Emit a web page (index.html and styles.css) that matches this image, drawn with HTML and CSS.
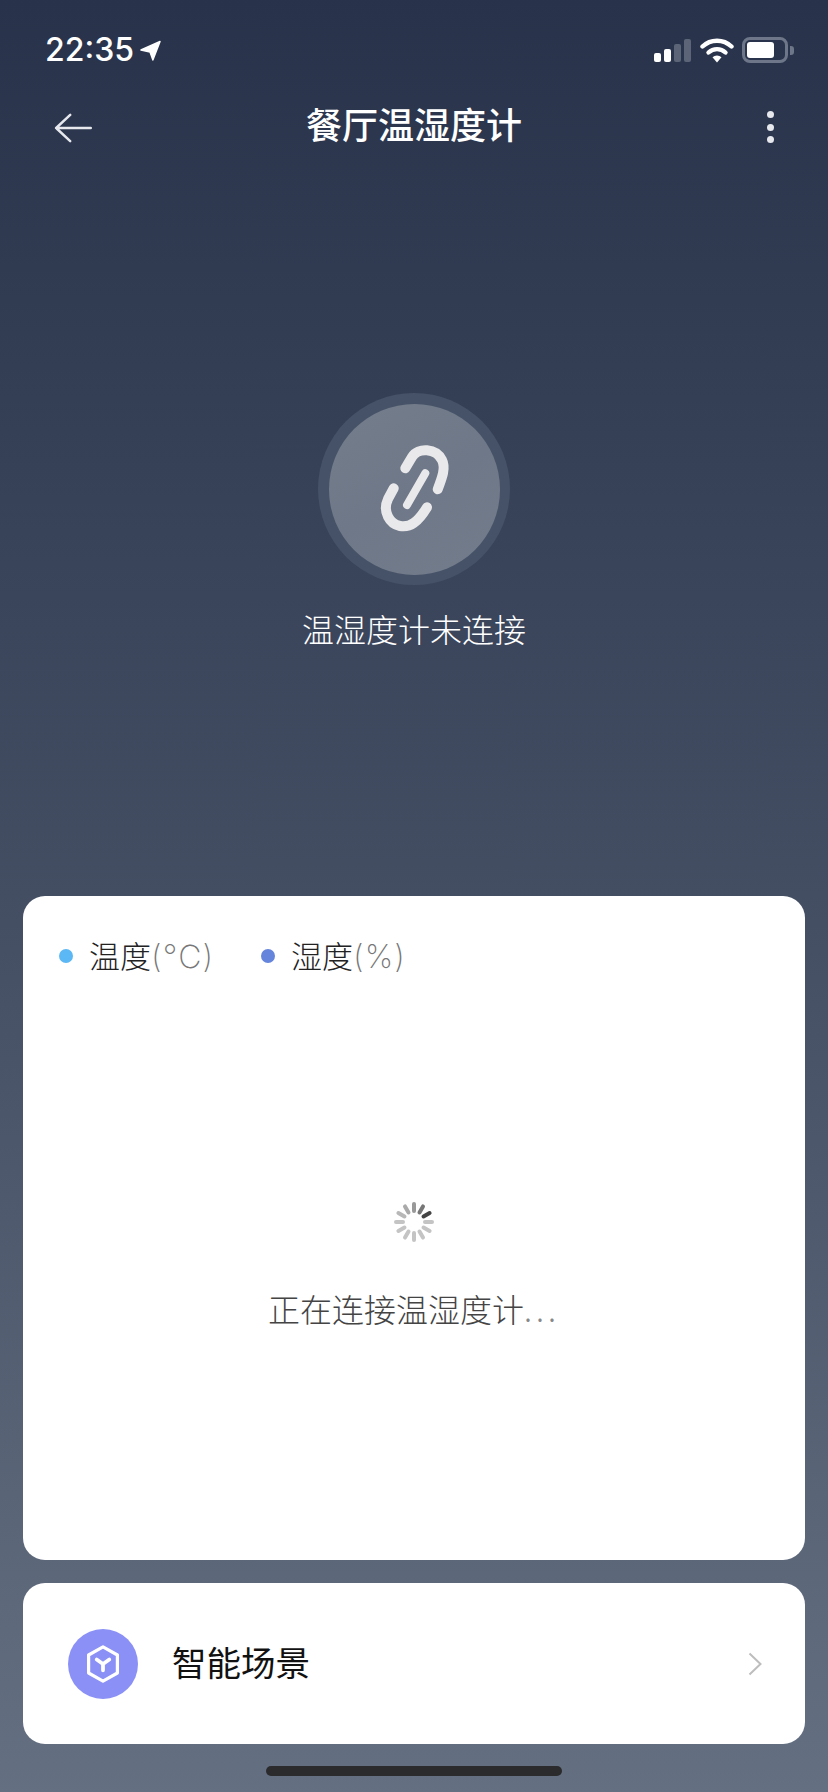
FILE: index.html
```html
<!DOCTYPE html>
<html lang="zh-CN">
<head>
<meta charset="utf-8">
<title>餐厅温湿度计</title>
<link rel="stylesheet" href="styles.css">
</head>
<body>
<div class="screen">
  <header class="status">
    <div class="status-left">
      <span class="time">22:35</span>
      <svg class="loc" viewBox="0 0 22 22"><path d="M1 10.5 21 1.5 13.5 21 10.5 12.5Z" fill="#fff" stroke="#fff" stroke-width="1.5" stroke-linejoin="round"/></svg>
    </div>
    <div class="status-right">
      <div class="signal">
        <span class="bar b1"></span><span class="bar b2"></span><span class="bar b3"></span><span class="bar b4"></span>
      </div>
      <svg class="wifi" viewBox="0 0 34 26"><path d="M2.5 9.5a21 21 0 0 1 29 0" fill="none" stroke="#fff" stroke-width="4.4" stroke-linecap="round"/><path d="M8.5 15.5a12.5 12.5 0 0 1 17 0" fill="none" stroke="#fff" stroke-width="4.4" stroke-linecap="round"/><path d="M12.5 20.2 17 25.5l4.5-5.3a6.5 6.5 0 0 0-9 0Z" fill="#fff"/></svg>
      <div class="battery"><span class="battery-fill"></span></div>
      <span class="battery-nub"></span>
    </div>
  </header>

  <nav class="nav">
    <svg class="back" viewBox="0 0 40 32"><path d="M39 16H2M17 2 2 16l15 14" fill="none" stroke="#e6e8ee" stroke-width="2.6" stroke-linecap="round" stroke-linejoin="round"/></svg>
    <h1 class="title">餐厅温湿度计</h1>
    <div class="more"><i></i><i></i><i></i></div>
  </nav>

  <section class="hero">
    <div class="ring">
      <div class="disc">
        <svg class="link" viewBox="362 439 100 100"><g fill="none" stroke="#e9e9eb" stroke-linecap="round"><path stroke-width="10" d="M403.3 468.3 410 457C416 447 434 448 440 460 444 468 440 478 435.7 489.3"/><path stroke-width="8" d="M423.3 473.3 405 505"/><path stroke-width="10" d="M391.7 488.3 386 499C380 512 388 524 398 526 408 528 416 522 425 507.3"/></g></svg>
      </div>
    </div>
    <p class="hero-text">温湿度计未连接</p>
  </section>

  <section class="card chart">
    <div class="legend">
      <div class="legend-item"><span class="dot dot-temp"></span><span class="legend-name">温度<span class="unit">(°C)</span></span></div>
      <div class="legend-item"><span class="dot dot-hum"></span><span class="legend-name">湿度<span class="unit">(%)</span></span></div>
    </div>
    <svg class="spinner" viewBox="-21 -21 42 42">
      <g stroke-width="4" stroke-linecap="round">
        <path d="M0-11V-18" stroke="#999"/>
        <path d="M0-11V-18" stroke="#777" transform="rotate(30)"/>
        <path d="M0-11V-18" stroke="#444" transform="rotate(60)"/>
        <path d="M0-11V-18" stroke="#c4c4c4" transform="rotate(90)"/>
        <path d="M0-11V-18" stroke="#c4c4c4" transform="rotate(120)"/>
        <path d="M0-11V-18" stroke="#c4c4c4" transform="rotate(150)"/>
        <path d="M0-11V-18" stroke="#c4c4c4" transform="rotate(180)"/>
        <path d="M0-11V-18" stroke="#c4c4c4" transform="rotate(210)"/>
        <path d="M0-11V-18" stroke="#c4c4c4" transform="rotate(240)"/>
        <path d="M0-11V-18" stroke="#c4c4c4" transform="rotate(270)"/>
        <path d="M0-11V-18" stroke="#b8b8b8" transform="rotate(300)"/>
        <path d="M0-11V-18" stroke="#aaa" transform="rotate(330)"/>
      </g>
    </svg>
    <p class="connecting">正在连接温湿度计<span class="ellipsis">...</span></p>
  </section>

  <section class="card scene">
    <div class="scene-icon">
      <svg viewBox="0 0 40 44"><path d="M20 3 36 12V32L20 41 4 32V12Z" fill="none" stroke="#fff" stroke-width="3.6" stroke-linejoin="round"/><path d="M13 17 20 22 27 17M20 22V29" fill="none" stroke="#fff" stroke-width="4.2" stroke-linecap="round" stroke-linejoin="round"/></svg>
    </div>
    <span class="scene-name">智能场景</span>
    <svg class="chevron" viewBox="0 0 14 24"><path d="M1.5 1.5 12.5 12 1.5 22.5" fill="none" stroke="#bdbdbd" stroke-width="2"/></svg>
  </section>

  <div class="home-bar"></div>
</div>
</body>
</html>
```

FILE: styles.css
```css
* { box-sizing: border-box; }
html, body { margin: 0; padding: 0; }
body { font-family: "Noto Sans CJK SC", "Noto Sans", sans-serif; }
.screen {
  width: 828px;
  height: 1792px;
  overflow: hidden;
  display: flex;
  flex-direction: column;
  background: linear-gradient(180deg, #28334b 0%, #434e63 50%, #646f81 100%);
}
.status {
  height: 96px;
  padding: 32px 34px 0 45px;
  display: flex;
  justify-content: space-between;
  align-items: flex-start;
}
.status-left { display: flex; align-items: center; height: 36px; }
.time {
  font-family: Inter, "Liberation Sans", sans-serif;
  font-size: 32px;
  font-weight: 500;
  line-height: 36px;
  color: #fff;
}
.loc { width: 21px; height: 21px; margin-left: 6px; }
.status-right { display: flex; align-items: center; height: 26px; margin-top: 5px; }
.signal { display: flex; align-items: flex-end; gap: 3px; height: 24px; }
.bar { width: 7px; border-radius: 2px; background: #fff; }
.b1 { height: 9px; }
.b2 { height: 13px; }
.b3 { height: 18px; background: #5b6577; }
.b4 { height: 23px; background: #5b6577; }
.wifi { width: 34px; height: 26px; margin-left: 9px; }
.battery {
  width: 46px;
  height: 26px;
  margin-left: 8px;
  padding: 2px;
  border: 3px solid #6d7789;
  border-radius: 8px;
}
.battery-fill { display: block; width: 27px; height: 16px; background: #fff; border-radius: 3px; }
.battery-nub { width: 4px; height: 9px; margin-left: 2px; background: #6d7789; border-radius: 0 3px 3px 0; }
.nav {
  height: 60px;
  padding: 0 54px;
  display: grid;
  grid-template-columns: 1fr auto 1fr;
  align-items: center;
}
.back { width: 38px; height: 30px; margin-top: 4px; }
.title {
  margin: 0 0 6px;
  font-size: 36px;
  font-weight: 500;
  line-height: 54px;
  color: #fff;
  text-align: center;
}
.more { display: flex; flex-direction: column; gap: 5.5px; width: 7px; justify-self: end; margin-top: 2px; }
.more i { display: block; width: 7px; height: 7px; border-radius: 50%; background: #e6e8ee; }
.hero {
  height: 740px;
  padding-top: 237px;
  display: flex;
  flex-direction: column;
  align-items: center;
}
.ring {
  width: 192px;
  height: 192px;
  border-radius: 50%;
  background: #465267;
  display: flex;
  align-items: center;
  justify-content: center;
}
.disc {
  width: 171px;
  height: 171px;
  border-radius: 50%;
  background: linear-gradient(150deg, #737d8b 0%, #6f7888 50%, #737c8b 100%);
  display: flex;
  align-items: center;
  justify-content: center;
}
.link { width: 100px; height: 100px; }
.hero-text {
  margin: 21px 0 0;
  font-size: 32px;
  font-weight: 300;
  line-height: 44px;
  color: #fff;
}
.card { margin: 0 23px; background: #fff; border-radius: 22px; }
.chart {
  height: 664px;
  display: flex;
  flex-direction: column;
  align-items: center;
  padding-top: 41px;
}
.legend { align-self: stretch; display: flex; padding-left: 36px; gap: 47px; }
.legend-item { display: flex; align-items: center; }
.dot { width: 14px; height: 14px; border-radius: 50%; }
.dot-temp { background: #5bb8f5; }
.dot-hum { background: #6585dc; }
.legend-name {
  margin-left: 16px;
  font-size: 31px;
  font-weight: 300;
  line-height: 36px;
  color: #222;
}
.unit {
  font-family: Inter, "Noto Sans", sans-serif;
  font-size: 32px;
  font-weight: 200;
  letter-spacing: 1px;
  color: #777;
}
.spinner { width: 42px; height: 42px; margin-top: 226px; }
.connecting {
  margin: 45px 0 0;
  font-size: 32px;
  font-weight: 300;
  line-height: 40px;
  color: #444;
}
.ellipsis { letter-spacing: 4px; color: #888; }
.scene {
  height: 161px;
  margin-top: 23px;
  padding: 0 43px 0 45px;
  display: flex;
  align-items: center;
}
.scene-icon {
  width: 70px;
  height: 70px;
  border-radius: 50%;
  background: #8a90f5;
  display: flex;
  align-items: center;
  justify-content: center;
}
.scene-icon svg { width: 36px; height: 40px; }
.scene-name {
  margin: 0 0 6px 34px;
  flex: 1;
  font-size: 34.5px;
  line-height: 44px;
  color: #111;
}
.chevron { width: 14px; height: 24px; }
.home-bar {
  width: 296px;
  height: 10px;
  margin: 22px auto 0;
  border-radius: 5px;
  background: #2b2b2d;
}
```
